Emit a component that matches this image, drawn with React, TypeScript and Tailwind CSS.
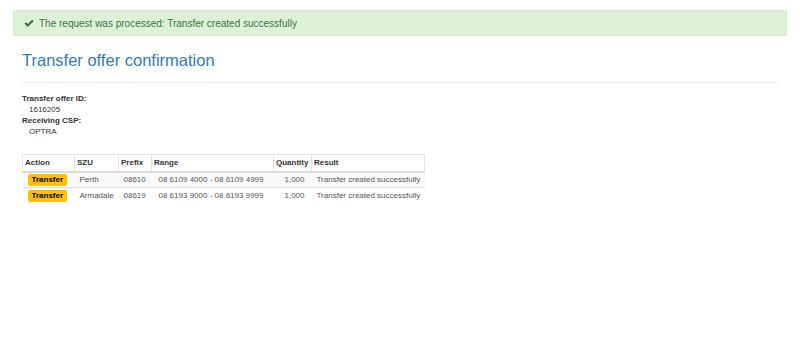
const rows = [
  { szu: "Perth", prefix: "08610", range: "08 6109 4000 - 08 6109 4999", qty: "1,000", result: "Transfer created successfully" },
  { szu: "Armadale", prefix: "08619", range: "08 6193 9000 - 08 6193 9999", qty: "1,000", result: "Transfer created successfully" },
];

function Check() {
  return (
    <svg width="10" height="9" viewBox="0 0 12 10" className="shrink-0">
      <path d="M0.5 5.2 L2.3 3.4 L4.6 5.7 L9.7 0.6 L11.5 2.4 L4.6 9.3 Z" fill="#3c763d" />
    </svg>
  );
}

export default function App() {
  return (
    <div className="w-[800px] h-[355px] bg-white text-[#333]" style={{ fontFamily: '"Liberation Sans", Arial, sans-serif' }}>
      <div className="pt-[10px] px-[13px]">
        <div className="h-[26px] flex items-center gap-[5px] pl-[10px] bg-[#dff0d8] border border-[#d6e9c6] rounded-[2px] text-[10px] text-[#3c763d]">
          <Check />
          <span>The request was processed: Transfer created successfully</span>
        </div>
      </div>

      <div className="px-[22px]">
        <h3 className="mt-[14px] text-[16.5px] leading-[20px] text-[#337ab7]">Transfer offer confirmation</h3>
        <div className="mt-[12px] w-[756px] border-t border-[#eee]" />

        <div className="mt-[10px] text-[8px] leading-[11px]">
          <div className="font-bold">Transfer offer ID:</div>
          <div className="pl-[7px]">1616205</div>
          <div className="font-bold">Receiving CSP:</div>
          <div className="pl-[7px]">OPTRA</div>
        </div>

        <table className="mt-[17px] w-[402px] border-collapse text-[8px] leading-[10px] table-fixed">
          <colgroup>
            <col className="w-[52px]" />
            <col className="w-[44px]" />
            <col className="w-[33px]" />
            <col className="w-[122px]" />
            <col className="w-[38px]" />
            <col className="w-[113px]" />
          </colgroup>
          <thead>
            <tr className="h-[17px]">
              {["Action", "SZU", "Prefix", "Range", "Quantity", "Result"].map(h => (
                <th key={h} className="font-bold text-left px-[2px] border border-[#e4e4e4] border-b-2 border-b-[#ddd]">
                  {h}
                </th>
              ))}
            </tr>
          </thead>
          <tbody className="text-[#555]">
            {rows.map((r, i) => (
              <tr key={r.prefix} className={`h-[16px] ${i === 0 ? "bg-[#f9f9f9]" : "border-t border-[#ddd]"}`}>
                <td className="px-[5px]">
                  <span className="inline-block bg-[#ffc000] text-black font-bold rounded-[2px] px-[4px] leading-[12px]">Transfer</span>
                </td>
                <td className="px-[5px]">{r.szu}</td>
                <td className="px-[5px]">{r.prefix}</td>
                <td className="px-[7px] whitespace-nowrap">{r.range}</td>
                <td className="px-[7px] text-right">{r.qty}</td>
                <td className="px-[5px] whitespace-nowrap">{r.result}</td>
              </tr>
            ))}
          </tbody>
        </table>
      </div>
    </div>
  );
}
